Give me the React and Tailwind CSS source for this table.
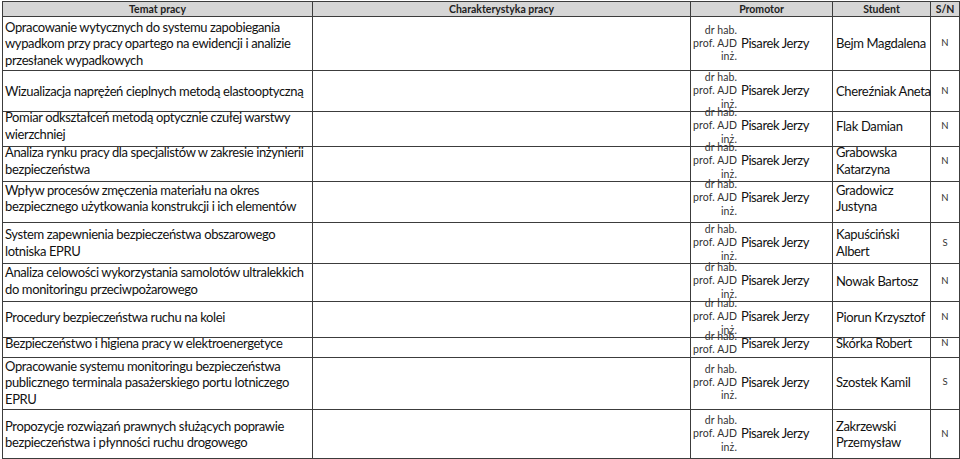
import React from 'react'

const rows = [
  { h: 'h-[54px]', topic: ['Opracowanie wytycznych do systemu zapobiegania', 'wypadkom przy pracy opartego na ewidencji i analizie', 'przesłanek wypadkowych'], student: ['Bejm Magdalena'], sn: 'N' },
  { h: 'h-[35px]', topic: ['Wizualizacja naprężeń cieplnych metodą elastooptyczną'], student: ['Chereźniak Aneta'], sn: 'N' },
  { h: 'h-[35px]', topic: ['Pomiar odkształceń metodą optycznie czułej warstwy', 'wierzchniej'], student: ['Flak Damian'], sn: 'N' },
  { h: 'h-[33px]', topic: ['Analiza rynku pracy dla specjalistów w zakresie inżynierii', 'bezpieczeństwa'], student: ['Grabowska', 'Katarzyna'], sn: 'N' },
  { h: 'h-[49px]', topic: ['Wpływ procesów zmęczenia materiału na okres', 'bezpiecznego użytkowania konstrukcji i ich elementów'], student: ['Gradowicz', 'Justyna'], sn: 'N' },
  { h: 'h-[38px]', topic: ['System zapewnienia bezpieczeństwa obszarowego', 'lotniska EPRU'], student: ['Kapuściński', 'Albert'], sn: 'S' },
  { h: 'h-[36px]', topic: ['Analiza celowości wykorzystania samolotów ultralekkich', 'do monitoringu przeciwpożarowego'], student: ['Nowak Bartosz'], sn: 'N' },
  { h: 'h-[33px]', topic: ['Procedury bezpieczeństwa ruchu na kolei'], student: ['Piorun Krzysztof'], sn: 'N' },
  { h: 'h-[26px]', topic: ['Bezpieczeństwo i higiena pracy w elektroenergetyce'], student: ['Skórka Robert'], sn: 'N', short: true },
  { h: 'h-[54px]', topic: ['Opracowanie systemu monitoringu bezpieczeństwa', 'publicznego terminala pasażerskiego portu lotniczego', 'EPRU'], student: ['Szostek Kamil'], sn: 'S' },
  { h: 'h-[49px]', topic: ['Propozycje rozwiązań prawnych służących poprawie', 'bezpieczeństwa i płynności ruchu drogowego'], student: ['Zakrzewski', 'Przemysław'], sn: 'N' },
]

const cols = 'grid grid-cols-[310px_378px_142px_98px_29px]'
const cell = 'border-r border-b border-[#3c3c3c]'

const Lines = ({ items, className }) => (
  <div className={className}>
    {items.map((t, i) => (
      <div key={i} className="whitespace-nowrap">{t}</div>
    ))}
  </div>
)

export default function App() {
  return (
    <div className="bg-white w-[960px] h-[459px] pt-[1px] pl-[2px] font-[Lato,sans-serif] text-[#111]">
      <div className="w-[958px] border-l border-t border-[#3c3c3c]">
        {/* header */}
        <div className={`${cols} h-[15px] bg-[#d6d6d6] text-[10.5px] font-bold leading-[14px] text-[#222]`}>
          <div className={`${cell} text-center`}>Temat pracy</div>
          <div className={`${cell} text-center`}>Charakterystyka pracy</div>
          <div className={`${cell} text-center`}>Promotor</div>
          <div className={`${cell} text-center`}>Student</div>
          <div className={`${cell} text-center`}>S/N</div>
        </div>

        {rows.map((r, i) => (
          <div key={i} className={`${cols} ${r.h}`}>
            <div className={`${cell} flex items-center pl-[2px] text-[13px] leading-[16.5px] tracking-[-0.38px]`}>
              <Lines items={r.topic} />
            </div>
            <div className={cell}></div>
            <div className={`${cell} flex items-center pl-[2px] gap-[4px]`}>
              <Lines
                items={r.short ? ['dr hab.', 'prof. AJD'] : ['dr hab.', 'prof. AJD', 'inż.']}
                className="text-right text-[10.5px] leading-[13.3px] text-[#333] tracking-[0.1px]"
              />
              <span className="text-[13px] whitespace-nowrap tracking-[-0.4px]">Pisarek Jerzy</span>
            </div>
            <div className={`${cell} flex items-center pl-[3px] text-[13px] leading-[16.5px] tracking-[-0.35px]`}>
              <Lines items={r.student} />
            </div>
            <div className={`${cell} flex items-center justify-center text-[9.5px] text-[#333]`}>{r.sn}</div>
          </div>
        ))}
      </div>
    </div>
  )
}
